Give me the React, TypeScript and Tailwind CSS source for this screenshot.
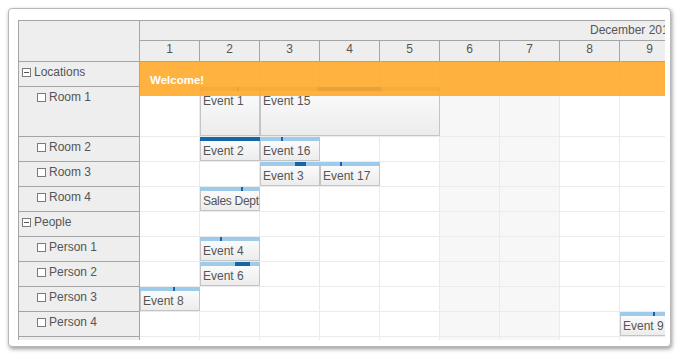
import React from "react";

type Row = { name: string; group?: boolean; h: number; check?: boolean };
type Ev = { row: number; col: number; span: number; label: string; bx: number; bw: number; tight?: boolean };

const rows: Row[] = [
  { name: "Locations", group: true, h: 25 },
  { name: "Room 1", h: 50, check: true },
  { name: "Room 2", h: 25, check: true },
  { name: "Room 3", h: 25, check: true },
  { name: "Room 4", h: 25, check: true },
  { name: "People", group: true, h: 25 },
  { name: "Person 1", h: 25, check: true },
  { name: "Person 2", h: 25, check: true },
  { name: "Person 3", h: 25, check: true },
  { name: "Person 4", h: 25, check: true },
  { name: "", h: 25 },
];

const events: Ev[] = [
  { row: 1, col: 1, span: 1, label: "Event 1", bx: 37, bw: 2 },
  { row: 1, col: 2, span: 3, label: "Event 15", bx: 58, bw: 63 },
  { row: 2, col: 1, span: 1, label: "Event 2", bx: 0, bw: 60 },
  { row: 2, col: 2, span: 1, label: "Event 16", bx: 21, bw: 2 },
  { row: 3, col: 2, span: 1, label: "Event 3", bx: 35, bw: 11 },
  { row: 3, col: 3, span: 1, label: "Event 17", bx: 20, bw: 2 },
  { row: 4, col: 1, span: 1, label: "Sales Dept", bx: 41, bw: 2, tight: true },
  { row: 6, col: 1, span: 1, label: "Event 4", bx: 20, bw: 2 },
  { row: 7, col: 1, span: 1, label: "Event 6", bx: 35, bw: 15 },
  { row: 8, col: 0, span: 1, label: "Event 8", bx: 33, bw: 2 },
  { row: 9, col: 8, span: 1, label: "Event 9", bx: 33, bw: 2 },
];

const days = [1, 2, 3, 4, 5, 6, 7, 8, 9];

function CheckBox() {
  return <span className="inline-block w-[9px] h-[9px] border border-[#7a7a7a] bg-white shrink-0" />;
}

function MinusBox() {
  return (
    <span className="relative inline-block w-[9px] h-[9px] border border-[#7a7a7a] bg-white shrink-0">
      <span className="absolute left-[1px] top-[3px] w-[5px] h-[1px] bg-[#555]" />
    </span>
  );
}

export default function App() {
  return (
    <div className="w-[680px] h-[355px] bg-white overflow-hidden pt-[8px] pl-[8px] font-['Liberation_Sans',Arial,sans-serif] text-[12px] text-[#555]">
      <div className="w-[663px] h-[339px] border border-[#b8b8b8] rounded-[4px] bg-white shadow-[1px_2px_4px_rgba(0,0,0,0.4)] pt-[11px] pl-[9px]">
        <div className="relative w-[647px] h-[320px] overflow-hidden flex">
          {/* Row header column */}
          <div className="w-[122px] shrink-0 flex flex-col border-l border-t border-r border-[#a5a5a5] bg-[#eeeeee]">
            <div className="h-[41px] border-b border-[#a5a5a5] shrink-0" />
            {rows.map((r, i) => (
              <div
                key={i}
                className={`shrink-0 border-b border-[#a5a5a5] flex items-start pt-[3px] leading-[15px] ${r.group ? "pl-[3px]" : "pl-[18px]"}`}
                style={{ height: r.h }}
              >
                {r.name && (
                  <div className="flex items-center gap-[3px]">
                    {r.group ? <MinusBox /> : <CheckBox />}
                    <span>{r.name}</span>
                  </div>
                )}
              </div>
            ))}
          </div>

          {/* Timeline */}
          <div className="flex flex-col shrink-0">
            <div className="border-t border-[#a5a5a5] bg-[#eeeeee]">
              <div className="h-[20px] border-b border-[#a5a5a5] relative">
                <span className="absolute left-[450px] top-[1px] leading-[17px] whitespace-nowrap">December 2014</span>
              </div>
              <div className="h-[21px] border-b border-[#a5a5a5] flex">
                {days.map((d) => (
                  <div key={d} className="w-[60px] shrink-0 border-r border-[#a5a5a5] text-center leading-[17px]">
                    {d}
                  </div>
                ))}
              </div>
            </div>
            {rows.map((r, i) => (
              <div key={i} className="relative flex shrink-0" style={{ height: r.h }}>
                {days.map((d) => (
                  <div
                    key={d}
                    className={`w-[60px] shrink-0 border-r border-b border-[#ebebeb] ${d === 6 || d === 7 ? "bg-[#f7f7f7]" : "bg-white"}`}
                  />
                ))}
                {events
                  .filter((e) => e.row === i)
                  .map((e) => (
                    <div
                      key={e.label}
                      className="absolute top-0 flex flex-col"
                      style={{ left: e.col * 60, width: e.span * 60, height: r.h - 1 }}
                    >
                      <div className="relative h-[4px] bg-[#9fcbeb] shrink-0">
                        <div className="absolute top-0 h-[4px] bg-[#1466a8]" style={{ left: e.bx, width: e.bw }} />
                      </div>
                      <div
                        className={`flex-1 border-l border-r border-b border-[#c4c4c4] bg-gradient-to-b from-[#fbfbfb] to-[#ececec] pl-[2px] pt-[3px] leading-[15px] whitespace-nowrap overflow-hidden ${e.tight ? "tracking-[-0.3px]" : ""}`}
                      >
                        {e.label}
                      </div>
                    </div>
                  ))}
              </div>
            ))}
          </div>

          {/* Welcome banner */}
          <div className="absolute left-[122px] top-[42px] w-[525px] h-[34px] bg-[#ffa92a]/90 pl-[10px] pt-[11px] leading-[15px] text-white font-bold text-[11.5px]">
            Welcome!
          </div>
        </div>
      </div>
    </div>
  );
}
